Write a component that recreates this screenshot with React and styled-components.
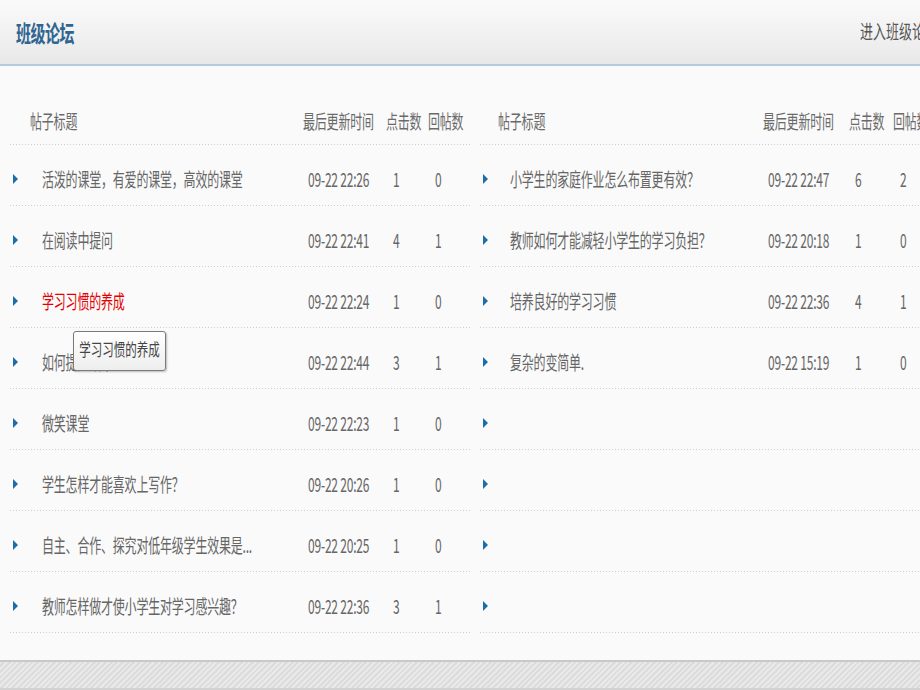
import React from "react";
import styled, { createGlobalStyle } from "styled-components";

const GlobalStyle = createGlobalStyle`
  html, body {
    margin: 0;
    padding: 0;
    background: #fafafa;
    overflow: hidden;
  }
  body {
    font-family: "Noto Sans CJK SC", "Noto Sans", sans-serif;
  }
`;

const Page = styled.div`
  width: 950px;
  height: 690px;
  display: flex;
  flex-direction: column;
  background: #fafafa;
`;

const Header = styled.div`
  height: 64px;
  flex-shrink: 0;
  display: flex;
  align-items: center;
  justify-content: space-between;
  padding: 0 12px 0 16px;
  background: linear-gradient(to bottom, #fafafa 0%, #f1f1f1 55%, #e8e8e8 100%);
  border-bottom: 2px solid #b3cbdd;
`;

const Title = styled.span`
  display: inline-block;
  font-size: 15px;
  font-weight: 700;
  color: #2f6590;
  letter-spacing: -0.5px;
  transform: scaleY(1.55);
  margin-top: -2px;
`;

const EnterLink = styled.span`
  display: inline-block;
  font-size: 13px;
  color: #555;
  transform: scaleY(1.5);
  white-space: nowrap;
  margin-top: -4px;
`;

const Body = styled.div`
  flex: 1;
  display: flex;
  gap: 8px;
  padding: 27px 0 0 10px;
  background: #fafafa;
`;

const Table = styled.div`
  width: 462px;
  flex-shrink: 0;
  display: flex;
  flex-direction: column;
`;

const dotted = `
  background-image: repeating-linear-gradient(to right, #cfcfcf 0 1px, transparent 1px 3px);
  background-size: 100% 1px;
  background-position: left bottom;
  background-repeat: no-repeat;
`;

const HeadRow = styled.div`
  height: 52px;
  display: grid;
  grid-template-columns: ${(p) => p.$cols};
  align-items: center;
  ${dotted}
`;

const Row = styled.div`
  position: relative;
  height: 61px;
  display: grid;
  grid-template-columns: ${(p) => p.$cols};
  align-items: center;
  padding-top: 2px;
  box-sizing: border-box;
  ${dotted}
`;

const Cell = styled.div`
  padding-left: ${(p) => p.$pad || 0}px;
  white-space: nowrap;
`;

const HeadTitleCell = styled.div`
  grid-column: 1 / 3;
  padding-left: ${(p) => p.$pad}px;
`;

const Txt = styled.span`
  display: inline-block;
  font-size: 12px;
  color: ${(p) => (p.$red ? "#e40000" : "#666")};
  transform: scaleY(1.6);
  white-space: nowrap;
  letter-spacing: -0.2px;
`;

const HeadTxt = styled(Txt)`
  color: #6a6a6a;
`;

const ArrowCell = styled.div`
  padding: 4px 0 0 3px;
  display: flex;
  align-items: center;
`;

const Tooltip = styled.div`
  position: absolute;
  left: 63px;
  top: 3px;
  width: 93px;
  height: 40px;
  box-sizing: border-box;
  border: 1px solid #7a7a7a;
  border-radius: 3px;
  background: linear-gradient(to bottom, #ffffff, #eeeeef);
  box-shadow: 1px 1px 2px rgba(0, 0, 0, 0.25);
  display: flex;
  align-items: center;
  justify-content: center;
  z-index: 2;
`;

const TipTxt = styled.span`
  display: inline-block;
  font-size: 11.5px;
  color: #444;
  transform: scaleY(1.5);
  white-space: nowrap;
  margin-top: -6px;
`;

const Footer = styled.div`
  height: 26px;
  flex-shrink: 0;
  border-top: 2px solid #c9c9c9;
  border-bottom: 2px solid #d2d2d2;
  background: repeating-linear-gradient(135deg, #e9e9e9 0 2px, #dcdcdc 2px 4px);
`;

const Arrow = () => (
  <svg width="5" height="10" viewBox="0 0 5 10">
    <polygon points="0,0 5,5 0,10" fill="#1d6ea8" />
  </svg>
);

const leftCols = "32px 261px 83px 42px 1fr";
const rightCols = "30px 253px 86px 44px 1fr";

const leftPads = { time: 5, click: 7, reply: 7 };
const rightPads = { time: 5, click: 6, reply: 7 };

const leftRows = [
  { title: "活泼的课堂，有爱的课堂，高效的课堂", time: "09-22 22:26", click: "1", reply: "0" },
  { title: "在阅读中提问", time: "09-22 22:41", click: "4", reply: "1" },
  { title: "学习习惯的养成", time: "09-22 22:24", click: "1", reply: "0", red: true },
  { title: "如何提高效率", time: "09-22 22:44", click: "3", reply: "1", tip: "学习习惯的养成" },
  { title: "微笑课堂", time: "09-22 22:23", click: "1", reply: "0" },
  { title: "学生怎样才能喜欢上写作？", time: "09-22 20:26", click: "1", reply: "0" },
  { title: "自主、合作、探究对低年级学生效果是...", time: "09-22 20:25", click: "1", reply: "0" },
  { title: "教师怎样做才使小学生对学习感兴趣？", time: "09-22 22:36", click: "3", reply: "1" },
];

const rightRows = [
  { title: "小学生的家庭作业怎么布置更有效？", time: "09-22 22:47", click: "6", reply: "2" },
  { title: "教师如何才能减轻小学生的学习负担？", time: "09-22 20:18", click: "1", reply: "0" },
  { title: "培养良好的学习习惯", time: "09-22 22:36", click: "4", reply: "1" },
  { title: "复杂的变简单.", time: "09-22 15:19", click: "1", reply: "0" },
  {},
  {},
  {},
  {},
];

function ForumTable({ cols, pads, headPad, rows }) {
  return (
    <Table>
      <HeadRow $cols={cols}>
        <HeadTitleCell $pad={headPad}>
          <HeadTxt>帖子标题</HeadTxt>
        </HeadTitleCell>
        <Cell>
          <HeadTxt>最后更新时间</HeadTxt>
        </Cell>
        <Cell>
          <HeadTxt>点击数</HeadTxt>
        </Cell>
        <Cell>
          <HeadTxt>回帖数</HeadTxt>
        </Cell>
      </HeadRow>
      {rows.map((r, i) => (
        <Row key={i} $cols={cols}>
          <ArrowCell>
            <Arrow />
          </ArrowCell>
          <Cell>{r.title && <Txt $red={r.red}>{r.title}</Txt>}</Cell>
          <Cell $pad={pads.time}>{r.time && <Txt>{r.time}</Txt>}</Cell>
          <Cell $pad={pads.click}>{r.click && <Txt>{r.click}</Txt>}</Cell>
          <Cell $pad={pads.reply}>{r.reply && <Txt>{r.reply}</Txt>}</Cell>
          {r.tip && (
            <Tooltip>
              <TipTxt>{r.tip}</TipTxt>
            </Tooltip>
          )}
        </Row>
      ))}
    </Table>
  );
}

export default function App() {
  return (
    <>
      <GlobalStyle />
      <Page>
        <Header>
          <Title>班级论坛</Title>
          <EnterLink>进入班级论坛</EnterLink>
        </Header>
        <Body>
          <ForumTable cols={leftCols} pads={leftPads} headPad={20} rows={leftRows} />
          <ForumTable cols={rightCols} pads={rightPads} headPad={18} rows={rightRows} />
        </Body>
        <Footer />
      </Page>
    </>
  );
}
